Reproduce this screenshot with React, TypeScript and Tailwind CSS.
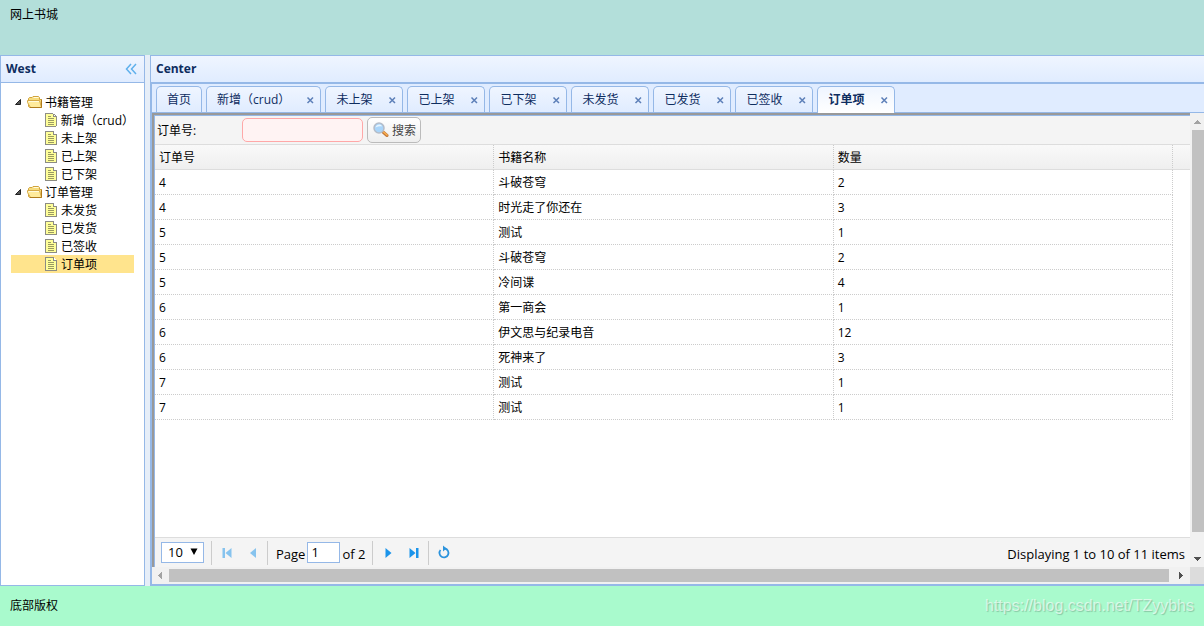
import React, { useState } from "react";

const treeData = [
    { title: "书籍管理", children: ["新增（crud）", "未上架", "已上架", "已下架"] },
    { title: "订单管理", children: ["未发货", "已发货", "已签收", "订单项"] },
];

const tabs = ["首页", "新增（crud）", "未上架", "已上架", "已下架", "未发货", "已发货", "已签收", "订单项"];

const rows = [
    { id: 4, name: "斗破苍穹", count: 2 },
    { id: 4, name: "时光走了你还在", count: 3 },
    { id: 5, name: "测试", count: 1 },
    { id: 5, name: "斗破苍穹", count: 2 },
    { id: 5, name: "冷间谍", count: 4 },
    { id: 6, name: "第一商会", count: 1 },
    { id: 6, name: "伊文思与纪录电音", count: 12 },
    { id: 6, name: "死神来了", count: 3 },
    { id: 7, name: "测试", count: 1 },
    { id: 7, name: "测试", count: 1 },
];

const FolderIcon: React.FC = () => (
    <svg className="w-4 h-[18px]" viewBox="0 0 16 18" fill="none">
        <path d="M1.5 13.5V5.5L2.5 4.5H5L6 3.5H11.5L12.5 4.5V6.5H14.5V14.5H2.5Z" fill="#f7dc7c" stroke="#d0a23c" />
        <path d="M6.5 4.500H11.500" stroke="#fffbe0" />
        <path d="M3.500 14.500L0.500 9.500V7.500H12.500L14.500 14.500Z" fill="#ffeb9c" stroke="#d6aa48" />
        <path d="M1.500 8.500H12" stroke="#fffce0" />
        <path d="M14.500 6.500V14.500H3" stroke="#b07c1c" />
    </svg>
);

const FileIcon: React.FC = () => (
    <svg className="w-4 h-[18px]" viewBox="0 0 16 18" fill="none" shapeRendering="crispEdges">
        <path d="M2.500 2.500H10.500L13.500 5.500V15.500H2.500Z" fill="#ffff99" stroke="#8c8c84" />
        <path d="M10.500 2.500V5.500H13.500" fill="#fff" stroke="#8c8c84" />
        <path d="M5 5.500h3M5 7.500h6M5 9.500h6M5 11.500h6M5 13.500h6" stroke="#9a9a62" />
    </svg>
);

const SearchIcon: React.FC = () => (
    <svg className="size-4" viewBox="0 0 16 16" fill="none">
        <path d="M10 10l4 3.500" stroke="#c2783a" strokeWidth="3" strokeLinecap="round" />
        <path d="M10.500 10l3.500 3" stroke="#fcb04e" strokeWidth="1.500" strokeLinecap="round" />
        <circle cx="6" cy="6" r="5" fill="#a9d5fa" stroke="#b4bcc8" strokeWidth="1.500" />
        <path d="M2.500 5.500C3 3.500 4.500 2.500 6.500 2.500C8 2.500 9 3.500 9 4.500C7 4 5 4.500 2.500 5.500Z" fill="#e6f5ff" />
    </svg>
);

type PagerButtonProps = { label: string; d: string; disabled?: boolean };

const PagerButton: React.FC<PagerButtonProps> = ({ label, d, disabled }) => (
    <button
        type="button"
        aria-label={label}
        disabled={disabled}
        className="w-[26px] h-6 flex items-center justify-center text-[#1b94ea] disabled:opacity-50"
    >
        <svg className="size-4" viewBox="0 0 16 16" fill="currentColor">
            <path d={d} />
        </svg>
    </button>
);

const Separator: React.FC = () => <div className="w-px h-6 bg-[#ccc]" />;

const ScrollArrow: React.FC<{ d: string; className: string }> = ({ d, className }) => (
    <svg className={className} viewBox="0 0 8 8" fill="currentColor" shapeRendering="crispEdges">
        <path d={d} />
    </svg>
);

const panelHeader =
    "h-[27px] shrink-0 flex items-center justify-between px-[5px] font-bold text-[#0e2d5f] border-b border-[#95b8e7] bg-linear-to-b from-[#eff5ff] to-[#e0ecff]";

const West: React.FC<{ active: string; onSelect: (title: string) => void }> = ({ active, onSelect }) => (
    <aside className="w-[145px] shrink-0 flex flex-col border border-[#95b8e7] bg-white">
        <div className={panelHeader}>
            <h2>West</h2>
            <button type="button" aria-label="Collapse" className="size-4 text-[#5fb0ec]">
                <svg className="size-4" viewBox="0 0 16 16" fill="none" stroke="currentColor" strokeWidth="1.500">
                    <path d="M8 3L3.500 8L8 13M13 3L8.500 8L13 13" />
                </svg>
            </button>
        </div>
        <ul className="p-[10px]">
            {treeData.map((node) => (
                <li key={node.title}>
                    <div className="h-[18px] flex items-center">
                        <svg className="w-4 h-[18px]" viewBox="0 0 16 18">
                            <path d="M4.500 11.500H9.500V6.500Z" fill="#555" stroke="#222" />
                        </svg>
                        <FolderIcon />
                        <span className="ml-0.5 pt-0.5">{node.title}</span>
                    </div>
                    <ul>
                        {node.children.map((child) => (
                            <li key={child}>
                                <button
                                    type="button"
                                    onClick={() => onSelect(child)}
                                    className={`w-full h-[18px] pl-8 flex items-center whitespace-nowrap ${child === active ? "bg-[#ffe48d]" : "hover:bg-[#eaf2ff]"}`}
                                >
                                    <FileIcon />
                                    <span className="ml-0.5 pt-0.5">{child}</span>
                                </button>
                            </li>
                        ))}
                    </ul>
                </li>
            ))}
        </ul>
    </aside>
);

const Tabs: React.FC<{ active: string; onSelect: (title: string) => void }> = ({ active, onSelect }) => (
    <div className="h-[29px] shrink-0 flex items-start gap-1 pt-0.5 pl-1 border-b border-[#95b8e7] bg-[#e0ecff]">
        {tabs.map((title) => (
            <div
                key={title}
                className={`shrink-0 flex items-center border border-b-0 border-[#95b8e7] rounded-t-[5px] bg-linear-to-b from-[#eff5ff] ${
                    title === active ? "h-[27px] font-bold to-white" : "h-[26px] to-[#e0ecff]"
                }`}
            >
                <button type="button" onClick={() => onSelect(title)} className="px-[10px] text-[#0e2d5f]">
                    {title}
                </button>
                {title !== "首页" && (
                    <button type="button" aria-label={`Close ${title}`} className="mx-0.5 size-4 text-[#5c7fb8]">
                        <svg className="size-4" viewBox="0 0 16 16" stroke="currentColor" strokeWidth="1.500">
                            <path d="M5.500 5.500L11 11M11 5.500L5.500 11" />
                        </svg>
                    </button>
                )}
            </div>
        ))}
    </div>
);

const Toolbar: React.FC = () => (
    <form
        className="h-[29px] shrink-0 flex items-center pl-0.5 border-b border-[#ddd] bg-[#f4f4f4]"
        onSubmit={(e) => e.preventDefault()}
    >
        <label htmlFor="orderNo" className="w-[85px] pt-0.5">
            订单号:
        </label>
        <input
            id="orderNo"
            className="w-[121px] h-6 px-1 rounded-[5px] border border-[#ffa8a8] bg-[#fff3f3] outline-none"
        />
        <button
            type="submit"
            className="ml-1 h-[26px] pl-[5px] pr-1 flex items-center gap-[3px] rounded-[5px] border border-[#bbb] text-[#444] bg-linear-to-b from-white to-[#eee]"
        >
            <SearchIcon />
            <span className="pt-0.5">搜索</span>
        </button>
    </form>
);

const headCell =
    "h-[25px] px-1 pt-0.5 text-left font-normal border-b border-b-[#ddd] bg-linear-to-b from-[#f9f9f9] to-[#efefef]";
const bodyCell = "h-[25px] px-1 pt-0.5 border-r border-b border-dotted border-[#ccc]";

const DataGrid: React.FC = () => (
    <div className="flex-1 min-h-0 overflow-hidden bg-white">
        <table className="w-full table-fixed border-separate border-spacing-0">
            <thead>
                <tr>
                    {["订单号", "书籍名称", "数量"].map((name) => (
                        <th key={name} className={`${headCell} border-r border-r-[#ccc] [border-right-style:dotted]`}>
                            {name}
                        </th>
                    ))}
                    <th className={`${headCell} w-[17px]`} />
                </tr>
            </thead>
            <tbody>
                {rows.map((row, i) => (
                    <tr key={i}>
                        <td className={bodyCell}>{row.id}</td>
                        <td className={bodyCell}>{row.name}</td>
                        <td className={bodyCell}>{row.count}</td>
                        <td />
                    </tr>
                ))}
            </tbody>
        </table>
    </div>
);

const Pager: React.FC = () => (
    <div className="h-[30px] shrink-0 flex items-center pl-[6px] pr-[5px] border-t border-[#ddd] bg-[#f4f4f4] text-[13px]">
        <div className="relative mr-[7px]">
            <select
                aria-label="Page size"
                defaultValue="10"
                className="block w-[43px] h-[21px] pl-[6px] pb-0.5 appearance-none border border-[#95b8e7] bg-white leading-4 outline-none"
            >
                <option>10</option>
                <option>20</option>
                <option>50</option>
            </select>
            <svg className="absolute right-[6px] top-[6px] size-2 pointer-events-none" viewBox="0 0 8 8">
                <path d="M0.500 0.500H7.500L4 7Z" />
            </svg>
        </div>
        <Separator />
        <div className="flex pl-0.5 pr-px">
            <PagerButton label="First page" d="M3.500 3H6V13H3.500ZM12.500 3V13L6.500 8Z" disabled />
            <PagerButton label="Previous page" d="M11 3V13L5 8Z" disabled />
        </div>
        <Separator />
        <label htmlFor="page" className="ml-2 mr-0.5 pt-0.5">
            Page
        </label>
        <input
            id="page"
            defaultValue="1"
            className="w-[33px] h-[21px] px-[3px] pb-0.5 border border-[#95b8e7] bg-white outline-none"
        />
        <span className="ml-0.5 mr-[7px] pt-0.5">of 2</span>
        <Separator />
        <div className="flex pl-0.5 pr-px">
            <PagerButton label="Next page" d="M5.500 3V13L11.500 8Z" />
            <PagerButton label="Last page" d="M3.500 3V13L9.500 8ZM10 3H12.500V13H10Z" />
        </div>
        <Separator />
        <button type="button" aria-label="Refresh" className="ml-0.5 w-[26px] flex justify-center">
            <svg className="size-4" viewBox="0 0 16 16" fill="none">
                <path d="M9 3.500A4.500 4.500 0 1 1 4.500 5" stroke="#2b93dd" strokeWidth="1.800" />
                <path d="M7 0.500L10.500 3.500L7 6.500Z" fill="#2b93dd" />
            </svg>
        </button>
        <div className="ml-auto pt-0.5">Displaying 1 to 10 of 11 items</div>
    </div>
);

const VerticalScrollbar: React.FC = () => (
    <div className="w-[14px] shrink-0 flex flex-col pl-0.5 bg-[#f1f1f1]">
        <ScrollArrow className="w-2 h-[17px] mx-0.5 text-[#a3a3a3]" d="M0 6H7V5H6V4H5V3H4V2H3V3H2V4H1V5H0Z" />
        <div className="flex-1 bg-[#c1c1c1]" />
        <ScrollArrow className="w-2 h-[17px] mx-0.5 mt-[18px] text-[#505050]" d="M0 2H7V3H6V4H5V5H4V6H3V5H2V4H1V3H0Z" />
    </div>
);

const HorizontalScrollbar: React.FC = () => (
    <div className="h-[17px] shrink-0 flex bg-[#f1f1f1]">
        <ScrollArrow className="w-[17px] h-2 my-1 text-[#a3a3a3]" d="M5 1V8H4V7H3V6H2V5H1V4H2V3H3V2H4V1Z" />
        <div className="flex-1 my-0.5 bg-[#c1c1c1]" />
        <ScrollArrow className="w-[21px] h-2 my-1 text-[#505050]" d="M3 1V8H4V7H5V6H6V5H7V4H6V3H5V2H4V1Z" />
        <div className="w-[14px] bg-[#dcdcdc]" />
    </div>
);

const App: React.FC = () => {
    const [active, setActive] = useState("订单项");

    return (
        <div className="h-screen flex flex-col overflow-hidden text-black text-[12px] leading-4 font-['Open_Sans','Noto_Sans_CJK_SC',sans-serif]">
            <header className="h-[55px] shrink-0 px-[10px] py-[7px] bg-[#b3dfda]">网上书城</header>
            <div className="flex-1 min-h-0 flex bg-[#e6eef8]">
                <West active={active} onSelect={setActive} />
                <main className="flex-1 min-w-0 ml-[5px] flex flex-col border-t border-l border-b-2 border-[#95b8e7]">
                    <div className={panelHeader}>
                        <h2>Center</h2>
                    </div>
                    <div className="flex-1 min-h-0 flex flex-col border-t border-l border-[#95b8e7]">
                        <Tabs active={active} onSelect={setActive} />
                        <div className="flex-1 min-h-0 flex">
                            <div className="flex-1 min-w-0 flex border-t-2 border-l-2 border-[#999]">
                                <div className="flex-1 min-w-0 flex flex-col border-t border-l border-[#95b8e7]">
                                    <Toolbar />
                                    <DataGrid />
                                    <Pager />
                                </div>
                            </div>
                            <VerticalScrollbar />
                        </div>
                        <HorizontalScrollbar />
                    </div>
                </main>
            </div>
            <footer className="h-10 shrink-0 flex items-center justify-between px-[10px] bg-[#a9facd]">
                <span>底部版权</span>
                <span className="font-['Liberation_Sans',Arial,sans-serif] text-[16px] text-white/60 [text-shadow:1px_1px_1px_rgba(0,0,0,0.2)]">
                    https://blog.csdn.net/TZyybhs
                </span>
            </footer>
        </div>
    );
};

export default App;
